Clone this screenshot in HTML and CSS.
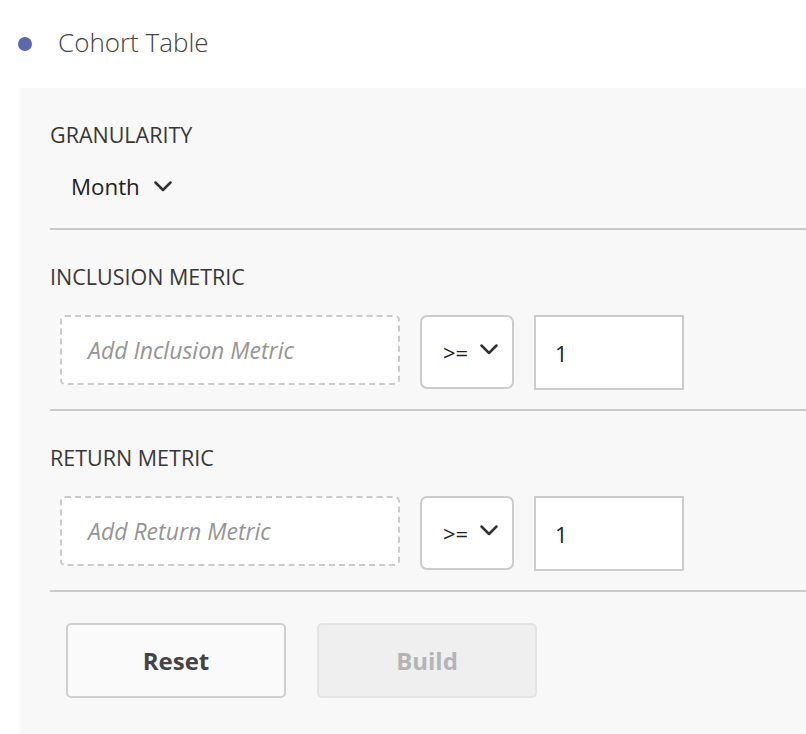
FILE: index.html
```html
<!DOCTYPE html>
<html>
<head>
<meta charset="utf-8">
<link rel="stylesheet" href="styles.css">
</head>
<body>
<div class="title">
  <span class="dot"></span>
  <span class="title-text">Cohort Table</span>
</div>
<div class="panel">
  <section class="sec sec-gran">
    <div class="label">GRANULARITY</div>
    <div class="gran">
      <span>Month</span>
      <svg class="chev" width="18" height="11" viewBox="0 0 18 11"><path d="M1.5 1.5 L9 9 L16.5 1.5" fill="none" stroke="#333333" stroke-width="2.5" stroke-linecap="round" stroke-linejoin="round"/></svg>
    </div>
  </section>
  <section class="sec">
    <div class="label">INCLUSION METRIC</div>
    <div class="row">
      <div class="drop">Add Inclusion Metric</div>
      <div class="select"><span>&gt;=</span><svg class="chev" width="18" height="11" viewBox="0 0 18 11"><path d="M1.5 1.5 L9 9 L16.5 1.5" fill="none" stroke="#333333" stroke-width="2.5" stroke-linecap="round" stroke-linejoin="round"/></svg></div>
      <div class="num">1</div>
    </div>
  </section>
  <section class="sec">
    <div class="label">RETURN METRIC</div>
    <div class="row">
      <div class="drop">Add Return Metric</div>
      <div class="select"><span>&gt;=</span><svg class="chev" width="18" height="11" viewBox="0 0 18 11"><path d="M1.5 1.5 L9 9 L16.5 1.5" fill="none" stroke="#333333" stroke-width="2.5" stroke-linecap="round" stroke-linejoin="round"/></svg></div>
      <div class="num">1</div>
    </div>
  </section>
  <div class="actions">
    <button class="btn btn-reset">Reset</button>
    <button class="btn btn-build" disabled>Build</button>
  </div>
</div>
</body>
</html>
```

FILE: styles.css
```css
html, body {
  margin: 0;
  padding: 0;
  overflow: hidden;
  background: #ffffff;
  font-family: "Open Sans", "Noto Sans", sans-serif;
  color: #4b4b4b;
}
.title {
  display: flex;
  align-items: center;
  height: 88px;
  box-sizing: border-box;
  padding: 0 0 0 18px;
}
.dot {
  width: 14px;
  height: 14px;
  border-radius: 50%;
  background: #5a69ad;
  margin-right: 26px;
}
.title-text {
  font-size: 26px;
  font-weight: 300;
  color: #444444;
  position: relative;
  top: -2px;
}
.panel {
  margin-left: 20px;
  width: 820px;
  height: 646px;
  background: #f8f8f8;
  padding: 35px 0 0 30px;
  box-sizing: border-box;
}
.sec {
  border-bottom: 2px solid #cacaca;
  padding-bottom: 19px;
  margin-bottom: 35px;
}
.sec-gran {
  padding-bottom: 27px;
}
.label {
  font-size: 21.5px;
  line-height: 24px;
  color: #383838;
}
.gran {
  display: flex;
  align-items: center;
  margin-top: 26px;
  margin-left: 21px;
  font-size: 22.3px;
  line-height: 28px;
  color: #222222;
}
.gran .chev {
  margin-left: 14px;
  margin-top: -2px;
}
.row {
  display: flex;
  align-items: flex-start;
  margin-top: 26px;
}
.drop {
  margin-left: 10px;
  width: 340px;
  height: 70px;
  box-sizing: border-box;
  border: 2px dashed #cbcbcb;
  border-radius: 5px;
  background: #ffffff;
  display: flex;
  align-items: center;
  padding-left: 26px;
  font-size: 23px;
  font-style: italic;
  color: #959595;
}
.select {
  margin-left: 20px;
  width: 94px;
  height: 74px;
  box-sizing: border-box;
  border: 2px solid #cccccc;
  border-radius: 7px;
  background: #ffffff;
  display: flex;
  align-items: center;
  padding-left: 21px;
  font-size: 22px;
  color: #222222;
}
.select .chev {
  margin-left: 12px;
  margin-top: -5px;
}
.num {
  margin-left: 20px;
  width: 150px;
  height: 75px;
  box-sizing: border-box;
  border: 2px solid #cccccc;
  background: #ffffff;
  display: flex;
  align-items: center;
  padding-left: 19px;
  font-size: 22px;
  color: #222222;
}
.actions {
  display: flex;
  margin-top: -4px;
  padding-left: 16px;
  gap: 31px;
}
.btn {
  width: 220px;
  height: 75px;
  box-sizing: border-box;
  border-radius: 5px;
  font-family: "Open Sans", "Noto Sans", sans-serif;
  font-size: 24px;
  font-weight: 700;
  padding: 0 0 0 0;
}
.btn-reset {
  background: #fafafa;
  border: 2px solid #cfcfcf;
  color: #444444;
}
.btn-build {
  background: #efefef;
  border: 2px solid #e4e4e4;
  color: #b4b4b4;
}
```
